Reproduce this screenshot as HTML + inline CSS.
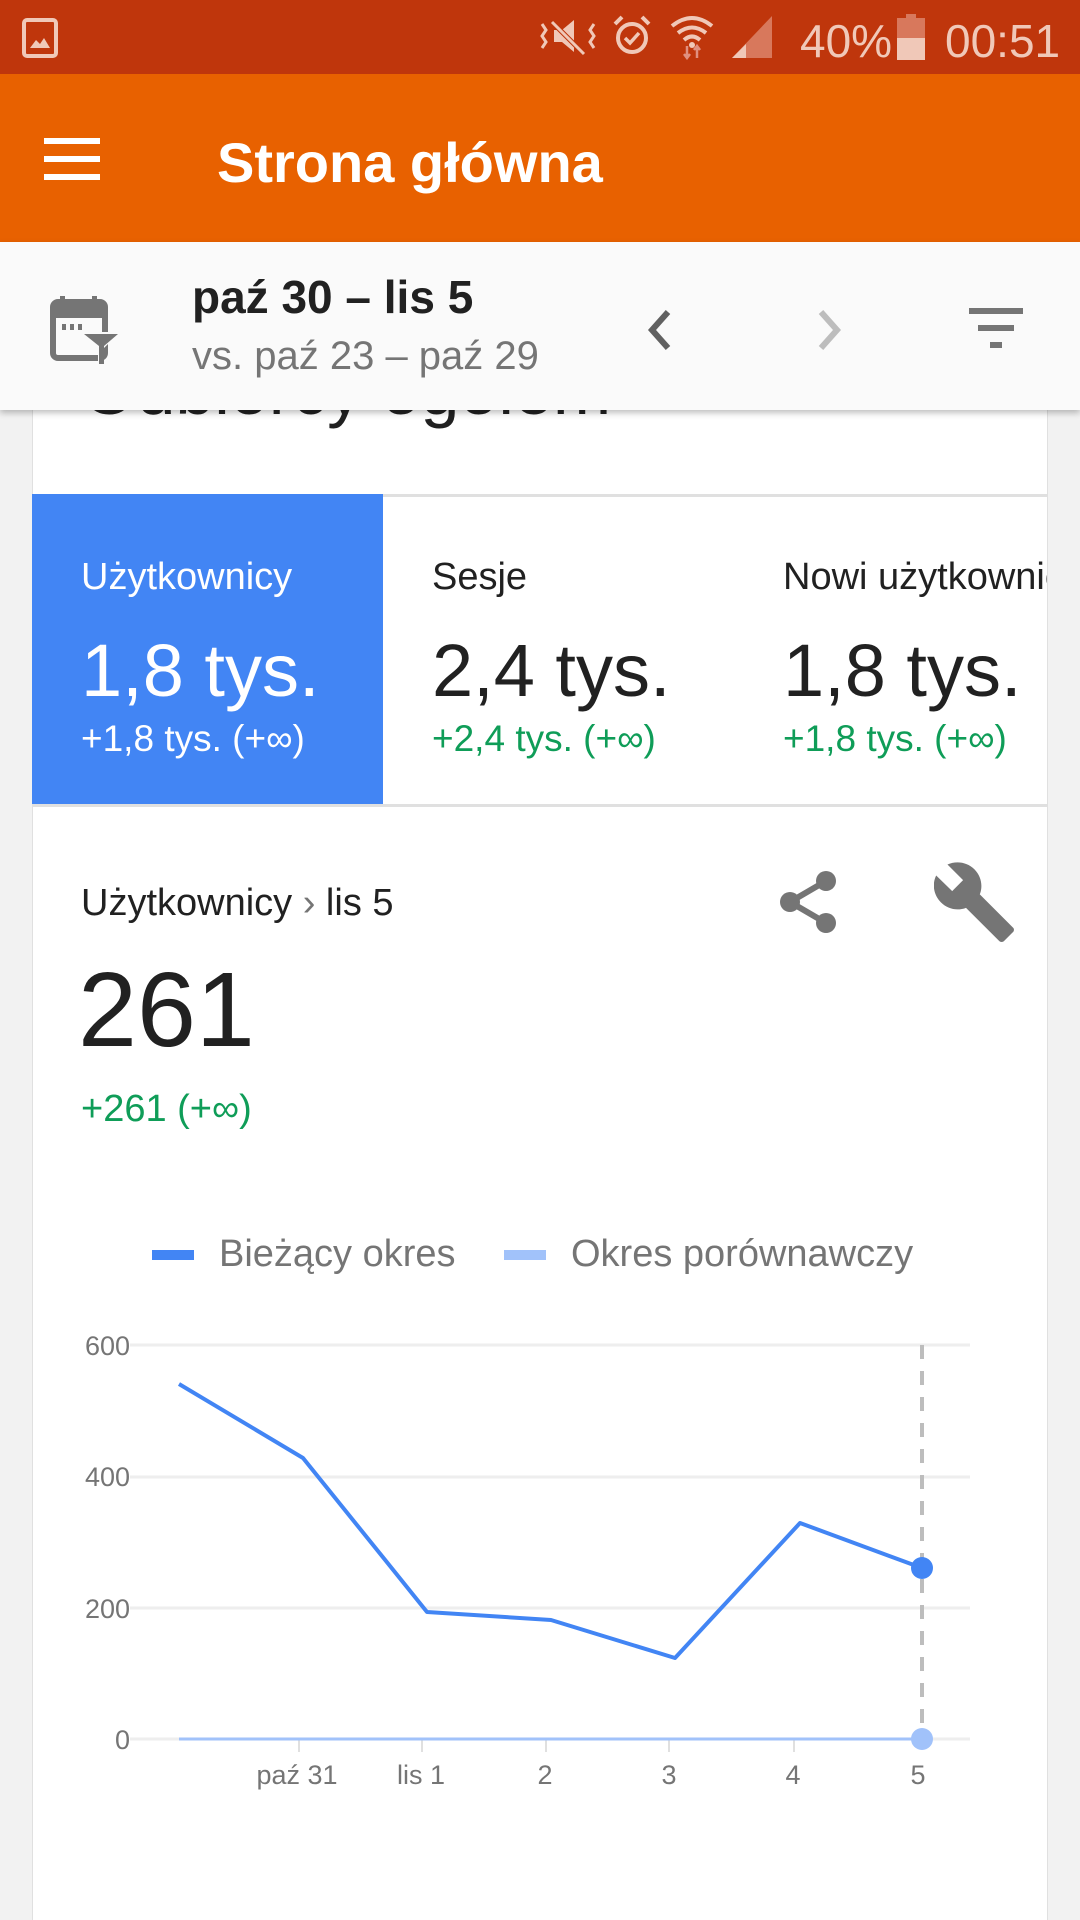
<!DOCTYPE html>
<html style="width:1080px;height:1920px;overflow:hidden"><head><meta charset="utf-8"><style>
*{margin:0;padding:0;box-sizing:border-box}
body{width:1080px;height:1920px;overflow:hidden;background:#f2f2f2;font-family:"Liberation Sans",Roboto,sans-serif;position:relative}
.abs{position:absolute;white-space:nowrap}
#status{left:0;top:0;width:1080px;height:74px;background:#bf360c}
#appbar{left:0;top:74px;width:1080px;height:168px;background:#e86100}
#datebar{left:0;top:242px;width:1080px;height:168px;background:#fafafa;box-shadow:0 3px 6px rgba(0,0,0,.25);z-index:5}
#card{left:32px;top:300px;width:1016px;height:1620px;background:#fff;border-left:1px solid #e0e0e0;border-right:1px solid #e0e0e0}
.green{color:#0f9d58}
</style></head><body>
<div id="status" class="abs">
 <svg class="abs" style="left:22px;top:18px" width="36" height="40" viewBox="0 0 36 40"><rect x="2" y="2" width="32" height="36" rx="3" fill="none" stroke="#f0c8b8" stroke-width="4"/><path d="M8 30 L14 22 L18 26 L22 20 L28 30Z" fill="#f0c8b8"/></svg>
 <svg class="abs" style="left:538px;top:16px" width="60" height="40" viewBox="0 0 60 40"><path d="M4 8 L8 14 L4 20 L8 26 L4 32 M56 8 L52 14 L56 20 L52 26 L56 32" stroke="#f0c8b8" stroke-width="3" fill="none"/><path d="M16 14 H24 L36 4 V36 L24 26 H16Z" fill="#f0c8b8"/><path d="M14 6 L46 38" stroke="#bf360c" stroke-width="5"/><path d="M14 6 L46 38" stroke="#f0c8b8" stroke-width="3"/></svg>
 <svg class="abs" style="left:612px;top:14px" width="40" height="44" viewBox="0 0 40 44"><circle cx="20" cy="24" r="14" fill="none" stroke="#f0c8b8" stroke-width="4"/><path d="M13 24 L18 29 L27 19" stroke="#f0c8b8" stroke-width="3.5" fill="none"/><path d="M3 10 L10 3 M37 10 L30 3" stroke="#f0c8b8" stroke-width="4"/></svg>
 <svg class="abs" style="left:670px;top:14px" width="44" height="46" viewBox="0 0 44 46"><path d="M2 12 Q22 -4 42 12 M8 19 Q22 8 36 19 M14 26 Q22 19 30 26" stroke="#f0c8b8" stroke-width="4" fill="none"/><circle cx="22" cy="31" r="3" fill="#f0c8b8"/><path d="M17 32 V44 M14 40 L17 44 L20 40 M27 44 V32 M24 36 L27 32 L30 36" stroke="#e09080" stroke-width="2.5" fill="none"/></svg>
 <svg class="abs" style="left:732px;top:16px" width="42" height="42" viewBox="0 0 42 42"><path d="M40 0 V42 H0Z" fill="#d8785c"/><path d="M14 28 V42 H0Z" fill="#f0c8b8"/></svg>
 <div class="abs" style="left:800px;top:14px;font-size:46px;color:#f0c8b8">40%</div>
 <svg class="abs" style="left:897px;top:14px" width="28" height="46" viewBox="0 0 28 46"><rect x="9" y="0" width="10" height="5" fill="#d8785c"/><rect x="0" y="4" width="28" height="20" fill="#d8785c"/><rect x="0" y="24" width="28" height="22" fill="#f0c8b8"/></svg>
 <div class="abs" style="left:945px;top:14px;font-size:46px;color:#f0c8b8">00:51</div>
</div>
<div id="appbar" class="abs">
 <div class="abs" style="left:44px;top:64px;width:56px;height:6px;background:#fff"></div>
 <div class="abs" style="left:44px;top:82px;width:56px;height:6px;background:#fff"></div>
 <div class="abs" style="left:44px;top:100px;width:56px;height:6px;background:#fff"></div>
 <div class="abs" style="left:217px;top:56px;font-size:56px;font-weight:bold;color:#fff">Strona główna</div>
</div>
<div id="datebar" class="abs">
 <svg class="abs" style="left:50px;top:52px" width="72" height="72" viewBox="0 0 72 72"><rect x="3" y="8" width="52" height="56" rx="5" fill="none" stroke="#757575" stroke-width="6"/><rect x="3" y="8" width="52" height="16" fill="#757575"/><rect x="10" y="2" width="5" height="8" fill="#757575"/><rect x="42" y="2" width="5" height="8" fill="#757575"/><rect x="12" y="30" width="4" height="6" fill="#757575"/><rect x="20" y="30" width="4" height="6" fill="#757575"/><rect x="28" y="30" width="4" height="6" fill="#757575"/><path d="M30 38 H70 L54 54 V72 H48 V54Z" fill="#fafafa"/><path d="M34 40 H68 L54 52 V70 H49 V52Z" fill="#757575"/></svg>
 <div class="abs" style="left:192px;top:28px;font-size:46px;font-weight:bold;color:#212121">paź 30 – lis 5</div>
 <div class="abs" style="left:192px;top:92px;font-size:40px;color:#757575">vs. paź 23 – paź 29</div>
 <svg class="abs" style="left:646px;top:66px" width="28" height="44" viewBox="0 0 28 44"><path d="M22 4 L6 22 L22 40" stroke="#616161" stroke-width="6" fill="none"/></svg>
 <svg class="abs" style="left:815px;top:66px" width="28" height="44" viewBox="0 0 28 44"><path d="M6 4 L22 22 L6 40" stroke="#bdbdbd" stroke-width="6" fill="none"/></svg>
 <div class="abs" style="left:969px;top:66px;width:54px;height:6px;background:#757575"></div>
 <div class="abs" style="left:978px;top:83px;width:36px;height:6px;background:#757575"></div>
 <div class="abs" style="left:990px;top:100px;width:12px;height:6px;background:#757575"></div>
</div>
<div id="card" class="abs"></div>
<div class="abs" style="left:82px;top:350px;font-size:70px;color:#212121;z-index:1">Odbiorcy ogółem</div>
<div class="abs" style="left:32px;top:494px;width:1016px;height:3px;background:#e0e0e0"></div>
<div class="abs" style="left:32px;top:494px;width:351px;height:312px;background:#4285f4"></div>
<div class="abs" style="left:32px;top:804px;width:1016px;height:3px;background:#e0e0e0"></div>
<div class="abs" style="left:81px;top:556px;font-size:38px;color:#fff">Użytkownicy</div>
<div class="abs" style="left:81px;top:628px;font-size:74px;color:#fff">1,8 tys.</div>
<div class="abs" style="left:81px;top:718px;font-size:37px;color:#fff">+1,8 tys. (+∞)</div>
<div class="abs" style="left:432px;top:556px;font-size:38px;color:#212121">Sesje</div>
<div class="abs" style="left:432px;top:628px;font-size:74px;color:#212121">2,4 tys.</div>
<div class="abs green" style="left:432px;top:718px;font-size:37px">+2,4 tys. (+∞)</div>
<div class="abs" style="left:783px;top:556px;font-size:38px;color:#212121;width:264px;overflow:hidden">Nowi użytkownicy</div>
<div class="abs" style="left:783px;top:628px;font-size:74px;color:#212121">1,8 tys.</div>
<div class="abs green" style="left:783px;top:718px;font-size:37px">+1,8 tys. (+∞)</div>
<div class="abs" style="left:81px;top:882px;font-size:38px;color:#212121">Użytkownicy <span style="color:#757575">›</span> lis 5</div>
<svg class="abs" style="left:775px;top:868px" width="66" height="70" viewBox="0 0 66 70"><path d="M15 34 L51 13 M15 34 L51 55" stroke="#757575" stroke-width="6"/><circle cx="15" cy="34" r="10" fill="#757575"/><circle cx="51" cy="13" r="10" fill="#757575"/><circle cx="51" cy="55" r="10" fill="#757575"/></svg>
<svg class="abs" style="left:934px;top:862px" width="80" height="80" viewBox="1 1 22 22"><path d="M22.7 19l-9.1-9.1c.9-2.3.4-5-1.5-6.9-2-2-5-2.4-7.4-1.3L9 6 6 9 1.6 4.7C.4 7.1.9 10.1 2.9 12.1c1.9 1.9 4.6 2.4 6.9 1.5l9.1 9.1c.4.4 1 .4 1.4 0l2.3-2.3c.5-.4.5-1.1.1-1.4z" fill="#757575"/></svg>
<div class="abs" style="left:78px;top:950px;font-size:106px;color:#212121">261</div>
<div class="abs green" style="left:81px;top:1088px;font-size:38px">+261 (+∞)</div>
<div class="abs" style="left:152px;top:1250px;width:42px;height:10px;background:#4285f4"></div>
<div class="abs" style="left:219px;top:1233px;font-size:38px;color:#757575">Bieżący okres</div>
<div class="abs" style="left:504px;top:1250px;width:42px;height:10px;background:#a1c2fa"></div>
<div class="abs" style="left:571px;top:1233px;font-size:38px;color:#757575">Okres porównawczy</div>
<svg class="abs" style="left:0;top:1300px" width="1080" height="520" viewBox="0 1300 1080 520">
 <g stroke="#eeeeee" stroke-width="3"><line x1="130" y1="1345" x2="970" y2="1345"/><line x1="130" y1="1477" x2="970" y2="1477"/><line x1="130" y1="1608" x2="970" y2="1608"/><line x1="130" y1="1739" x2="970" y2="1739"/></g>
 <g stroke="#e0e0e0" stroke-width="2"><line x1="299" y1="1739" x2="299" y2="1752"/><line x1="422" y1="1739" x2="422" y2="1752"/><line x1="546" y1="1739" x2="546" y2="1752"/><line x1="669" y1="1739" x2="669" y2="1752"/><line x1="794" y1="1739" x2="794" y2="1752"/></g>
 <g font-family="Liberation Sans,sans-serif" font-size="27" fill="#757575" text-anchor="end"><text x="130" y="1355">600</text><text x="130" y="1486">400</text><text x="130" y="1618">200</text><text x="130" y="1749">0</text></g>
 <g font-family="Liberation Sans,sans-serif" font-size="27" fill="#757575" text-anchor="middle"><text x="297" y="1784">paź 31</text><text x="421" y="1784">lis 1</text><text x="545" y="1784">2</text><text x="669" y="1784">3</text><text x="793" y="1784">4</text><text x="918" y="1784">5</text></g>
 <line x1="922" y1="1345" x2="922" y2="1739" stroke="#bdbdbd" stroke-width="4" stroke-dasharray="14 12"/>
 <line x1="179" y1="1739" x2="922" y2="1739" stroke="#a1c2fa" stroke-width="3"/>
 <polyline points="179,1384 303,1458 427,1612 551,1620 675,1658 800,1523 922,1568" fill="none" stroke="#4285f4" stroke-width="4" stroke-linejoin="round"/>
 <circle cx="922" cy="1568" r="11" fill="#4285f4"/>
 <circle cx="922" cy="1739" r="11" fill="#a1c2fa"/>
</svg>
</body></html>
